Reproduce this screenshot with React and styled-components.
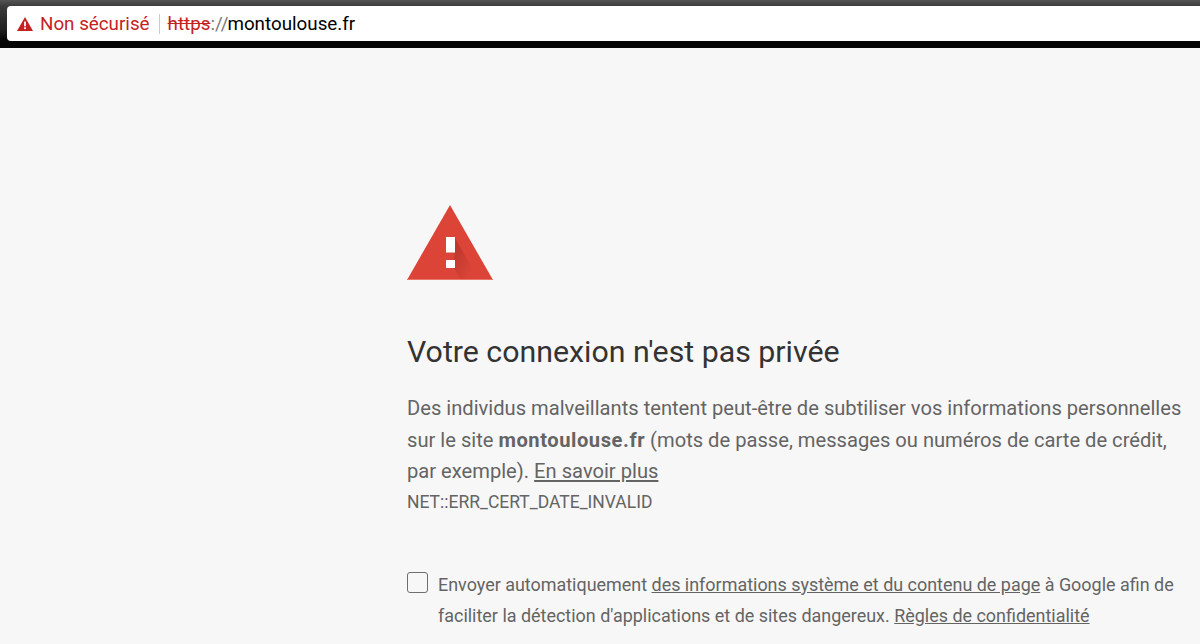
import React from 'react';
import styled, { createGlobalStyle } from 'styled-components';

const GlobalStyle = createGlobalStyle`
    html, body {
        margin: 0;
        padding: 0;
        height: 644px;
        overflow: hidden;
        background: #f7f7f7;
        font-family: Roboto, "Liberation Sans", sans-serif;
    }
`;

const Chrome = styled.div`
    height: 48px;
    box-sizing: border-box;
    padding: 6px 0 7px 7px;
    background: linear-gradient(to bottom, #555 0, #3c3c3c 6px, #1f1f1f 30px, #050505 41px);
`;

const UrlBar = styled.div`
    height: 35px;
    display: flex;
    align-items: center;
    padding-left: 10px;
    background: #fff;
    border-radius: 4px 0 0 4px;
    font-size: 18.8px;
`;

const SecurityChip = styled.div`
    display: flex;
    align-items: center;
    gap: 7px;
    color: #c5211f;
    padding-right: 9px;
    border-right: 1px solid #ccc;
    height: 20px;
`;

const Url = styled.div`
    margin-left: 8px;
    color: #000;
`;

const Scheme = styled.span`
    color: #c5211f;
    text-decoration: line-through;
`;

const Slashes = styled.span`
    color: #777;
    margin-right: -1px;
`;

const Main = styled.main`
    padding: 157px 0 0 407px;
    white-space: nowrap;
`;

const Icon = styled.svg`
    display: block;
    width: 86px;
    height: 75px;
`;

const Title = styled.h1`
    margin: 52px 0 0;
    font-size: 30.3px;
    line-height: 40px;
    font-weight: 400;
    color: #333;
`;

const Body = styled.p`
    margin: 21px 0 0;
    font-size: 20.15px;
    line-height: 31.5px;
    color: #646464;
    strong {
        font-weight: 700;
        letter-spacing: 0.55px;
    }
`;

const Link = styled.a`
    color: #646464;
    text-decoration: underline;
`;

const ErrorCode = styled.div`
    margin-top: 3px;
    font-size: 17.5px;
    line-height: 22px;
    color: #646464;
`;

const Option = styled.div`
    margin-top: 56px;
    display: grid;
    grid-template-columns: 21px 1fr;
    column-gap: 10px;
    font-size: 17.96px;
    line-height: 31.5px;
    color: #646464;
`;

const Checkbox = styled.span`
    box-sizing: border-box;
    width: 21px;
    height: 21px;
    margin-top: 3px;
    border: 1.5px solid #6e6e6e;
    border-radius: 3px;
`;

export default function App() {
    return (
        <>
            <GlobalStyle />
            <Chrome>
                <UrlBar>
                    <SecurityChip>
                        <svg width="16" height="14" viewBox="0 0 16 14">
                            <path d="M8 0 L16 14 H0 Z" fill="#c5211f" />
                            <rect x="7.1" y="4.5" width="1.8" height="4.8" fill="#fff" />
                            <rect x="7.1" y="10.3" width="1.8" height="1.8" fill="#fff" />
                        </svg>
                        Non sécurisé
                    </SecurityChip>
                    <Url>
                        <Scheme>https</Scheme><Slashes>://</Slashes>montoulouse.fr
                    </Url>
                </UrlBar>
            </Chrome>
            <Main>
                <Icon viewBox="0 0 86 75">
                    <defs>
                        <linearGradient id="shade" x1="0.1" y1="0.2" x2="0.75" y2="0.75">
                            <stop offset="0" stopColor="#b5332a" stopOpacity="0.75" />
                            <stop offset="1" stopColor="#b5332a" stopOpacity="0" />
                        </linearGradient>
                    </defs>
                    <path d="M43 0 L86 75 H0 Z" fill="#db4437" />
                    <path d="M48 33 L72 75 H54 L47 63 Z" fill="url(#shade)" />
                    <rect x="0.6" y="74" width="84.8" height="1" fill="#e8756a" />
                    <rect x="39" y="32" width="9" height="15.5" fill="#fff" />
                    <rect x="39" y="55" width="9" height="8" fill="#fff" />
                </Icon>
                <Title>Votre connexion n'est pas privée</Title>
                <Body>
                    Des individus malveillants tentent peut-être de subtiliser vos informations personnelles<br />
                    sur le site <strong>montoulouse.fr</strong> (mots de passe, messages ou numéros de carte de crédit,<br />
                    par exemple). <Link>En savoir plus</Link>
                </Body>
                <ErrorCode>NET::ERR_CERT_DATE_INVALID</ErrorCode>
                <Option>
                    <Checkbox />
                    <div>
                        Envoyer automatiquement <Link>des informations système et du contenu de page</Link> à Google afin de<br />
                        faciliter la détection d'applications et de sites dangereux. <Link>Règles de confidentialité</Link>
                    </div>
                </Option>
            </Main>
        </>
    );
}
